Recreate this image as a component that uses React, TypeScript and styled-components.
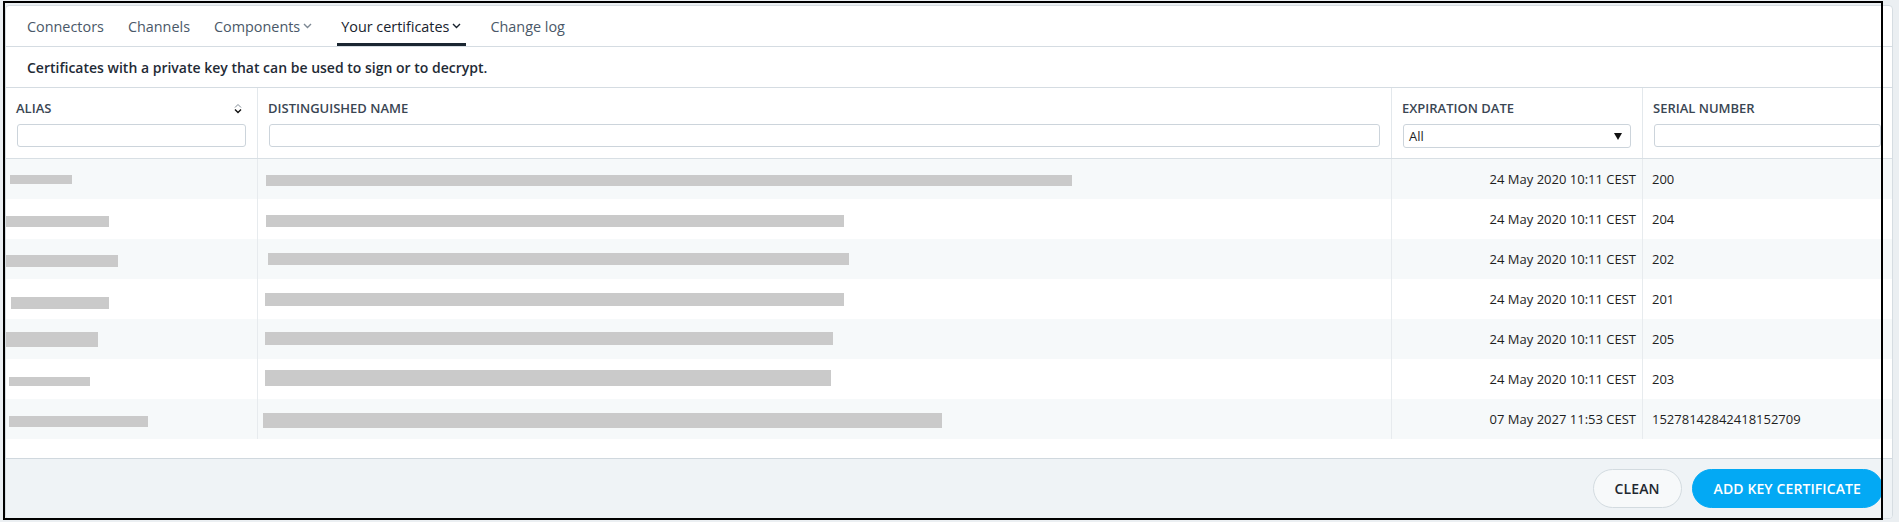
import { createGlobalStyle, styled } from "styled-components";

const GlobalStyle = createGlobalStyle`
  html, body {
    margin: 0;
    padding: 0;
    background: #ebeff2;
  }
  body {
    font-family: "Open Sans", "Liberation Sans", sans-serif;
    color: #1f2b36;
  }
  * {
    box-sizing: border-box;
  }
`;

const Page = styled.div`
  position: relative;
  height: 522px;
  padding: 5px 6px 0 5px;
`;

const Card = styled.main`
  height: 514px;
  background: #fff;
  border: 1px solid #d6dde2;
  border-radius: 4px;
  display: flex;
  flex-direction: column;
  overflow: hidden;
`;

const Nav = styled.nav`
  height: 41px;
  flex-shrink: 0;
  display: flex;
  gap: 16px;
  padding-left: 17px;
  border-bottom: 1px solid #d5dce2;
`;

const Tab = styled.div<{ $active?: boolean; $dropdown?: boolean }>`
  display: flex;
  align-items: center;
  padding: 3px 4px 0;
  margin-right: ${(p) => (p.$dropdown ? "4px" : "0")};
  font-size: 14.4px;
  font-weight: 500;
  color: ${(p) => (p.$active ? "#18222d" : "#4a5868")};
  border-bottom: 3px solid ${(p) => (p.$active ? "#1b2631" : "transparent")};
  cursor: pointer;

  & svg {
    margin-left: 3px;
    margin-right: 1px;
    color: ${(p) => (p.$active ? "#18222d" : "#7d8893")};
  }
`;

const Description = styled.p`
  margin: 0;
  height: 41px;
  flex-shrink: 0;
  display: flex;
  align-items: center;
  padding-left: 21px;
  font-size: 14px;
  font-weight: 600;
  color: #1f2b36;
  border-bottom: 1px solid #d5dce2;
`;

const columns = "251px 1134px 251px 1fr";

const HeaderRow = styled.div`
  display: grid;
  grid-template-columns: ${columns};
  border-bottom: 1px solid #d8dfe4;
  flex-shrink: 0;
`;

const HeaderCell = styled.div`
  display: flex;
  flex-direction: column;
  gap: 7px;
  padding: 11px 11px 10px;
  border-left: 1px solid #e3e8ec;

  &:first-child {
    border-left: none;
  }
`;

const HeaderTitle = styled.div`
  display: flex;
  justify-content: space-between;
  align-items: center;
  height: 18px;
  margin-left: -1px;
  font-size: 13px;
  font-weight: 600;
  color: #3a4653;
  text-transform: uppercase;
`;

const FilterInput = styled.input`
  width: 100%;
  height: 23px;
  margin: 0;
  border: 1px solid #ccd4db;
  border-radius: 3px;
  background: #fff;
  outline: none;
`;

const SelectBox = styled.div`
  display: flex;
  align-items: center;
  justify-content: space-between;
  height: 24px;
  padding: 0 8px 0 5px;
  border: 1px solid #ccd4db;
  border-radius: 3px;
  font-size: 13px;
  color: #1f1f1f;
  background: #fff;
`;

const Body = styled.div`
  flex: 1;
`;

const Row = styled.div<{ $striped: boolean }>`
  display: grid;
  grid-template-columns: ${columns};
  height: 40px;
  background: ${(p) => (p.$striped ? "#f6f9fa" : "#fff")};
`;

const Cell = styled.div<{ $align?: "left" | "right" }>`
  display: flex;
  align-items: center;
  justify-content: ${(p) => (p.$align === "right" ? "flex-end" : "flex-start")};
  padding: 0 6px 0 9px;
  font-size: 13px;
  color: #1e1e1e;
  border-left: 1px solid #e7ebee;
  white-space: nowrap;

  &:first-child {
    border-left: none;
  }
`;

const RedactedCell = styled.div`
  border-left: 1px solid #e7ebee;

  &:first-child {
    border-left: none;
  }
`;

const Redacted = styled.span<{ $x: number; $top: number; $w: number; $h: number }>`
  display: block;
  margin-left: ${(p) => p.$x}px;
  margin-top: ${(p) => p.$top}px;
  width: ${(p) => p.$w}px;
  height: ${(p) => p.$h}px;
  background: #cacaca;
`;

const Footer = styled.footer`
  height: 60px;
  flex-shrink: 0;
  display: flex;
  justify-content: flex-end;
  align-items: center;
  gap: 10px;
  padding: 0 9px;
  background: #eff3f6;
  border-top: 1px solid #d0d8de;
`;

const Button = styled.button<{ $primary?: boolean }>`
  height: 39px;
  padding: 0 21px;
  border-radius: 20px;
  font-family: inherit;
  font-size: 14px;
  font-weight: 600;
  letter-spacing: 0.1px;
  cursor: pointer;
  border: 1px solid ${(p) => (p.$primary ? "#03a9f4" : "#d3dbe0")};
  background: ${(p) => (p.$primary ? "#03a9f4" : "#f7f9fa")};
  color: ${(p) => (p.$primary ? "#fff" : "#1f2830")};
`;

const Frame = styled.div`
  position: absolute;
  left: 3px;
  top: 1px;
  width: 1880px;
  height: 519px;
  border: 2px solid #000;
  pointer-events: none;
`;

const Chevron = () => (
  <svg width="9" height="6" viewBox="0 0 9 6">
    <path d="M1 1l3.5 3.5L8 1" fill="none" stroke="currentColor" strokeWidth="1.4" />
  </svg>
);

const SortIcon = () => (
  <svg width="8" height="13" viewBox="0 0 8 13" style={{ marginRight: 4 }}>
    <path d="M1 5.5L4 2.5l3 3" fill="none" stroke="#7f8a94" strokeWidth="1" />
    <path d="M1 7.5l3 3 3-3" fill="none" stroke="#111" strokeWidth="1.4" />
  </svg>
);

const Caret = () => (
  <svg width="8" height="7" viewBox="0 0 8 7">
    <polygon points="0,0 8,0 4,7" fill="#111" />
  </svg>
);

type Bar = { x: number; top: number; w: number; h: number };

const rows: { alias: Bar; dn: Bar; date: string; serial: string }[] = [
  { alias: { x: 4, top: 16, w: 62, h: 9 }, dn: { x: 8, top: 16, w: 806, h: 11 }, date: "24 May 2020 10:11 CEST", serial: "200" },
  { alias: { x: 0, top: 17, w: 103, h: 11 }, dn: { x: 8, top: 16, w: 578, h: 12 }, date: "24 May 2020 10:11 CEST", serial: "204" },
  { alias: { x: 0, top: 16, w: 112, h: 12 }, dn: { x: 10, top: 14, w: 581, h: 12 }, date: "24 May 2020 10:11 CEST", serial: "202" },
  { alias: { x: 5, top: 18, w: 98, h: 12 }, dn: { x: 7, top: 14, w: 579, h: 13 }, date: "24 May 2020 10:11 CEST", serial: "201" },
  { alias: { x: 0, top: 13, w: 92, h: 15 }, dn: { x: 7, top: 13, w: 568, h: 13 }, date: "24 May 2020 10:11 CEST", serial: "205" },
  { alias: { x: 3, top: 18, w: 81, h: 9 }, dn: { x: 7, top: 11, w: 566, h: 16 }, date: "24 May 2020 10:11 CEST", serial: "203" },
  { alias: { x: 3, top: 17, w: 139, h: 11 }, dn: { x: 5, top: 14, w: 679, h: 15 }, date: "07 May 2027 11:53 CEST", serial: "15278142842418152709" },
];

export default function App() {
  return (
    <>
      <GlobalStyle />
      <Page>
        <Card>
          <Nav>
            <Tab>Connectors</Tab>
            <Tab>Channels</Tab>
            <Tab $dropdown>
              Components
              <Chevron />
            </Tab>
            <Tab $active $dropdown>
              Your certificates
              <Chevron />
            </Tab>
            <Tab>Change log</Tab>
          </Nav>
          <Description>Certificates with a private key that can be used to sign or to decrypt.</Description>
          <HeaderRow>
            <HeaderCell>
              <HeaderTitle>
                Alias
                <SortIcon />
              </HeaderTitle>
              <FilterInput />
            </HeaderCell>
            <HeaderCell>
              <HeaderTitle>Distinguished name</HeaderTitle>
              <FilterInput />
            </HeaderCell>
            <HeaderCell>
              <HeaderTitle>Expiration date</HeaderTitle>
              <SelectBox>
                All
                <Caret />
              </SelectBox>
            </HeaderCell>
            <HeaderCell>
              <HeaderTitle>Serial number</HeaderTitle>
              <FilterInput />
            </HeaderCell>
          </HeaderRow>
          <Body>
            {rows.map((r, i) => (
              <Row key={i} $striped={i % 2 === 0}>
                <RedactedCell>
                  <Redacted $x={r.alias.x} $top={r.alias.top} $w={r.alias.w} $h={r.alias.h} />
                </RedactedCell>
                <RedactedCell>
                  <Redacted $x={r.dn.x} $top={r.dn.top} $w={r.dn.w} $h={r.dn.h} />
                </RedactedCell>
                <Cell $align="right">{r.date}</Cell>
                <Cell>{r.serial}</Cell>
              </Row>
            ))}
          </Body>
          <Footer>
            <Button>CLEAN</Button>
            <Button $primary>ADD KEY CERTIFICATE</Button>
          </Footer>
        </Card>
        <Frame />
      </Page>
    </>
  );
}
